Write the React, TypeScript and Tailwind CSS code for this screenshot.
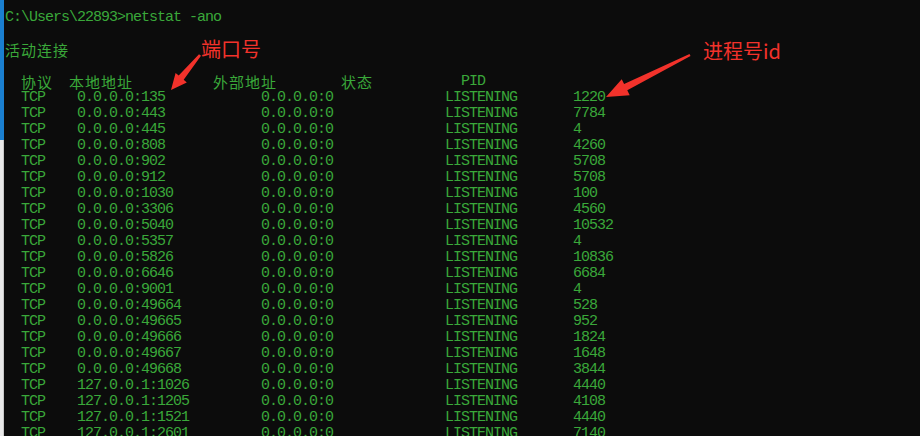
import React from 'react';

const rows: [string, string, string][] = [
  ['0.0.0.0:135', '0.0.0.0:0', '1220'],
  ['0.0.0.0:443', '0.0.0.0:0', '7784'],
  ['0.0.0.0:445', '0.0.0.0:0', '4'],
  ['0.0.0.0:808', '0.0.0.0:0', '4260'],
  ['0.0.0.0:902', '0.0.0.0:0', '5708'],
  ['0.0.0.0:912', '0.0.0.0:0', '5708'],
  ['0.0.0.0:1030', '0.0.0.0:0', '100'],
  ['0.0.0.0:3306', '0.0.0.0:0', '4560'],
  ['0.0.0.0:5040', '0.0.0.0:0', '10532'],
  ['0.0.0.0:5357', '0.0.0.0:0', '4'],
  ['0.0.0.0:5826', '0.0.0.0:0', '10836'],
  ['0.0.0.0:6646', '0.0.0.0:0', '6684'],
  ['0.0.0.0:9001', '0.0.0.0:0', '4'],
  ['0.0.0.0:49664', '0.0.0.0:0', '528'],
  ['0.0.0.0:49665', '0.0.0.0:0', '952'],
  ['0.0.0.0:49666', '0.0.0.0:0', '1824'],
  ['0.0.0.0:49667', '0.0.0.0:0', '1648'],
  ['0.0.0.0:49668', '0.0.0.0:0', '3844'],
  ['127.0.0.1:1026', '0.0.0.0:0', '4440'],
  ['127.0.0.1:1205', '0.0.0.0:0', '4108'],
  ['127.0.0.1:1521', '0.0.0.0:0', '4440'],
  ['127.0.0.1:2601', '0.0.0.0:0', '7140'],
];

// netstat 的固定列宽格式
const line = (local: string, foreign: string, pid: string) =>
  '  TCP    ' + local.padEnd(23) + foreign.padEnd(23) + 'LISTENING'.padEnd(16) + pid;

const cjk = "font-['Noto_Sans_CJK_SC',sans-serif] text-[15px] leading-4 tracking-[1px]";

const App: React.FC = () => {
  return (
    <div className="relative flex w-[920px] h-[436px] overflow-hidden bg-[#0c0c0c]">
      {/* 左边露出来的后面窗口 */}
      <div className="flex flex-col w-[4px] shrink-0">
        <div className="h-[140px] bg-[#1a7fd0]"></div>
        <div className="flex-1 bg-[#e9e9e9] border-r border-[#c8c8c8]"></div>
      </div>

      <div className="flex-1 pt-[10px] pl-[1px] text-[#3aa83a] font-['Liberation_Mono',monospace] text-[15px] tracking-[-1px] leading-4 whitespace-pre">
        <div>C:\Users\22893&gt;netstat -ano</div>
        <div>&nbsp;</div>
        <div className={cjk}>活动连接</div>
        <div>&nbsp;</div>
        <div className="flex h-4 items-start">
          <span className="w-[16px] shrink-0"></span>
          <span className={`w-[48px] shrink-0 ${cjk}`}>协议</span>
          <span className={`w-[144px] shrink-0 ${cjk}`}>本地地址</span>
          <span className={`w-[128px] shrink-0 ${cjk}`}>外部地址</span>
          <span className={`w-[120px] shrink-0 ${cjk}`}>状态</span>
          <span>PID</span>
        </div>
        {rows.map(([l, f, p]) => (
          <div key={l}>{line(l, f, p)}</div>
        ))}
      </div>

      {/* 标注 */}
      <div className="absolute left-[201px] top-[36px] text-[20px] leading-[26px] text-[#f2322b] font-['Noto_Sans_CJK_SC',sans-serif]">
        端口号
      </div>
      <div className="absolute left-[703px] top-[38px] text-[20px] leading-[26px] text-[#f2322b] font-['Noto_Sans_CJK_SC',sans-serif]">
        进程号id
      </div>
      <svg className="absolute inset-0 pointer-events-none" width="920" height="436" viewBox="0 0 920 436">
        <polygon
          fill="#f2322b"
          points="201,55.8 183.7,79.8 186.8,82.4 171,90 175.6,73 178.7,75.6 199,54.2"
        />
        <polygon
          fill="#f2322b"
          points="690.5,56.1 627.3,90.3 629.7,95.2 606,97 621.7,79.2 624.1,84.1 689.5,53.9"
        />
      </svg>
    </div>
  );
};

export default App;
